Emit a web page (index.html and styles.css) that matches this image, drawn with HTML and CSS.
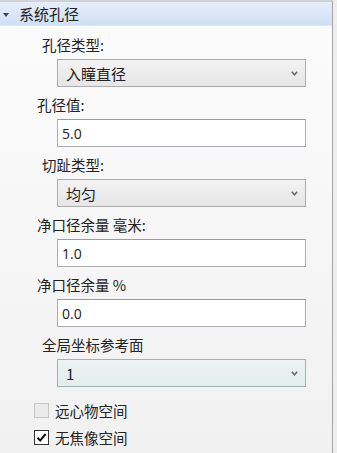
FILE: index.html
```html
<!DOCTYPE html>
<html lang="zh">
<head>
  <meta charset="UTF-8">
  <title>系统孔径</title>
  <link rel="stylesheet" href="styles.css">
</head>
<body>
  <div class="panel">
    <div class="section-head">
      <span class="caret"></span>
      <span>系统孔径</span>
    </div>

    <div class="form">
      <div class="field">
        <label class="lbl lbl-select">孔径类型:</label>
        <div class="select">
          <span>入瞳直径</span>
          <svg class="chev" width="7" height="5" viewBox="0 0 7 5"><path d="M0.8 0.8 L3.5 3.8 L6.2 0.8" fill="none" stroke="#6a6a6a" stroke-width="1.6"/></svg>
        </div>
      </div>

      <div class="field">
        <label class="lbl">孔径值:</label>
        <div class="input">5.0</div>
      </div>

      <div class="field">
        <label class="lbl lbl-select">切趾类型:</label>
        <div class="select">
          <span>均匀</span>
          <svg class="chev" width="7" height="5" viewBox="0 0 7 5"><path d="M0.8 0.8 L3.5 3.8 L6.2 0.8" fill="none" stroke="#6a6a6a" stroke-width="1.6"/></svg>
        </div>
      </div>

      <div class="field">
        <label class="lbl">净口径余量 毫米:</label>
        <div class="input">1.0</div>
      </div>

      <div class="field">
        <label class="lbl">净口径余量 %</label>
        <div class="input">0.0</div>
      </div>

      <div class="field">
        <label class="lbl lbl-select">全局坐标参考面</label>
        <div class="select select-active">
          <span>1</span>
          <svg class="chev" width="7" height="5" viewBox="0 0 7 5"><path d="M0.8 0.8 L3.5 3.8 L6.2 0.8" fill="none" stroke="#6a6a6a" stroke-width="1.6"/></svg>
        </div>
      </div>

      <div class="checks">
        <div class="check-row">
          <span class="box box-off"></span>
          <span>远心物空间</span>
        </div>
        <div class="check-row">
          <span class="box">
            <svg width="13" height="13" viewBox="0 0 13 13"><path d="M2.5 6.8 L5.2 9.6 L10.6 3" fill="none" stroke="#111" stroke-width="2"/></svg>
          </span>
          <span>无焦像空间</span>
        </div>
      </div>
    </div>
  </div>
</body>
</html>
```

FILE: styles.css
```css
body {
  margin: 0;
  background: #eeeeee;
  font-family: "Noto Sans CJK SC", "Noto Sans", sans-serif;
  font-size: 14.5px;
  color: #222;
}

.panel {
  width: 333px;
  height: 453px;
  border-right: 1px solid #a4a4a4;
  border-top: 2px solid #cfd3d8;
  box-sizing: border-box;
  background: linear-gradient(#fcfcfc, #f1f1f1);
}

.section-head {
  height: 23px;
  display: flex;
  align-items: center;
  gap: 10px;
  padding-left: 3px;
  font-size: 15px;
  background: linear-gradient(#e6eefa, #cfe0f5);
  border-bottom: 1px solid #e2e8f0;
}

.caret {
  width: 0;
  height: 0;
  border-left: 3px solid transparent;
  border-right: 3px solid transparent;
  border-top: 4px solid #444;
  margin-top: 2px;
}

.form {
  padding-top: 9px;
}

.field {
  margin-bottom: 8px;
}

.lbl {
  display: block;
  height: 20px;
  line-height: 20px;
  padding-left: 37px;
  margin-bottom: 4px;
}

.lbl-select {
  padding-left: 42px;
}

.select, .input {
  margin-left: 57px;
  width: 249px;
  height: 28px;
  box-sizing: border-box;
  display: flex;
  align-items: center;
}

.select {
  justify-content: space-between;
  padding: 0 7px 0 8px;
  border: 1px solid #acacac;
  background: linear-gradient(#f3f3f3, #e6e6e6);
  font-size: 15px;
}

.select-active {
  border-color: #9eb3b3;
  background: linear-gradient(#edf3f3, #e4ecec);
}

.chev {
  margin-top: 1px;
}

.input {
  padding-left: 4px;
  border: 1px solid #abadb3;
  border-top-color: #9a9ca2;
  background: #ffffff;
  font-family: "Open Sans", "Noto Sans", sans-serif;
  font-size: 14px;
}

.checks {
  padding-top: 5px;
}

.check-row {
  display: flex;
  align-items: center;
  gap: 6px;
  height: 20px;
  margin-bottom: 7px;
  padding-left: 34px;
}

.box {
  width: 13px;
  height: 13px;
  border: 1px solid #333;
  background: #fff;
  display: flex;
}

.box-off {
  border-color: #c4c4c4;
  background: #ebebeb;
}
```
